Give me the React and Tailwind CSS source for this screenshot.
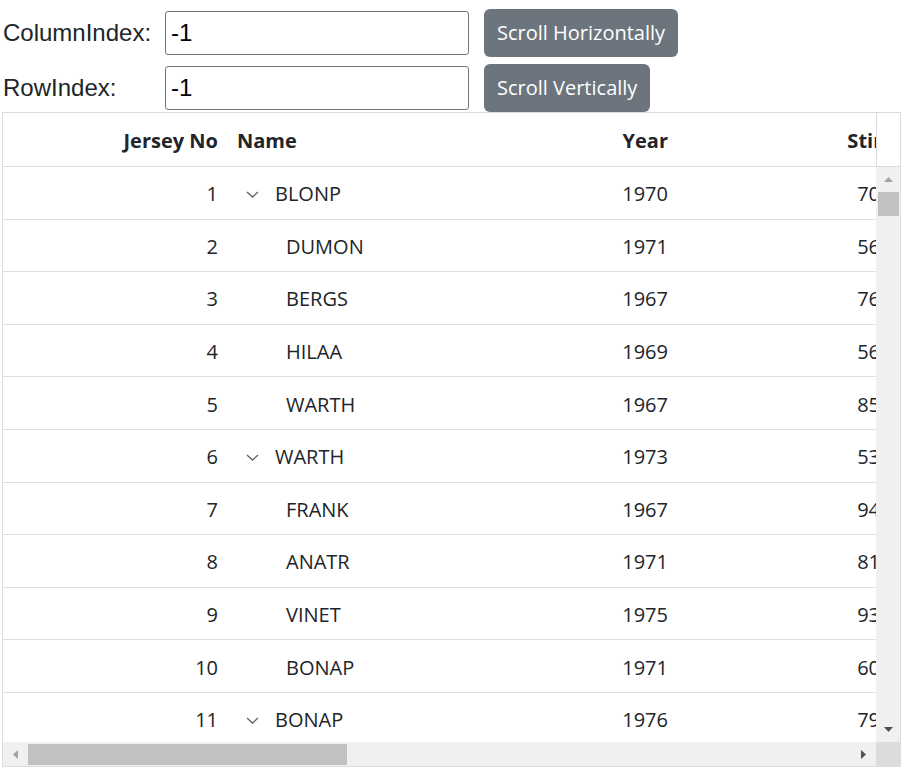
import React from 'react';

const rows = [
    { no: 1, name: 'BLONP', year: 1970, stint: 70, parent: true },
    { no: 2, name: 'DUMON', year: 1971, stint: 56 },
    { no: 3, name: 'BERGS', year: 1967, stint: 76 },
    { no: 4, name: 'HILAA', year: 1969, stint: 56 },
    { no: 5, name: 'WARTH', year: 1967, stint: 85 },
    { no: 6, name: 'WARTH', year: 1973, stint: 53, parent: true },
    { no: 7, name: 'FRANK', year: 1967, stint: 94 },
    { no: 8, name: 'ANATR', year: 1971, stint: 81 },
    { no: 9, name: 'VINET', year: 1975, stint: 93 },
    { no: 10, name: 'BONAP', year: 1971, stint: 60 },
    { no: 11, name: 'BONAP', year: 1976, stint: 79, parent: true },
];

const uiFont = { fontFamily: '"Segoe UI", "Open Sans", sans-serif' };

const Chevron = () => (
    <svg width="13" height="7" viewBox="0 0 13 7" className="shrink-0">
        <path d="M1 1 L6.5 6 L12 1" fill="none" stroke="#5f6368" strokeWidth="1.3" />
    </svg>
);

const Tri = ({ dir, color }) => {
    const pts = {
        up: '0,5 4.5,0 9,5',
        down: '0,0 4.5,5 9,0',
        left: '5,0 0,4.5 5,9',
        right: '0,0 5,4.5 0,9',
    }[dir];
    const vert = dir === 'up' || dir === 'down';
    return (
        <svg width={vert ? 9 : 5} height={vert ? 5 : 9} viewBox={vert ? '0 0 9 5' : '0 0 5 9'}>
            <polygon points={pts} fill={color} />
        </svg>
    );
};

const ControlRow = ({ label, button }) => (
    <div className="flex items-center h-[48px]">
        <div className="w-[165px] pl-[3px] text-[24px] text-[#212529] font-['Liberation_Sans',Arial,sans-serif]">
            {label}
        </div>
        <input
            defaultValue="-1"
            className="w-[304px] h-[44px] border border-[#767676] rounded-[3px] px-[5px] text-[24px] text-black font-['Liberation_Sans',Arial,sans-serif] outline-none"
        />
        <button
            className="ml-[15px] h-[48px] px-[13px] bg-[#6c757d] text-white text-[20px] rounded-[6px]"
            style={uiFont}
        >
            {button}
        </button>
    </div>
);

export default function App() {
    return (
        <div className="w-[904px] h-[769px] bg-white overflow-hidden pt-[9px]">
            <div className="flex flex-col gap-[7px]">
                <ControlRow label="ColumnIndex:" button="Scroll Horizontally" />
                <ControlRow label="RowIndex:" button="Scroll Vertically" />
            </div>

            {/* Grid */}
            <div
                className="ml-[2px] w-[899px] border border-[#dcdcdc] flex flex-col text-[20px] text-[#212529]"
                style={uiFont}
            >
                {/* Header */}
                <div className="flex h-[54px] border-b border-[#dcdcdc]">
                    <div className="w-[873px] overflow-hidden flex items-center font-bold pt-[2px]">
                        <div className="w-[225px] shrink-0 text-right pr-[10px]">Jersey No</div>
                        <div className="w-[300px] shrink-0 pl-[9px]">Name</div>
                        <div className="w-[150px] shrink-0 text-right pr-[10px]">Year</div>
                        <div className="w-[227px] shrink-0 text-right pr-[10px]">Stint</div>
                    </div>
                    <div className="flex-1 border-l border-[#dcdcdc]" />
                </div>

                {/* Body */}
                <div className="flex h-[575px]">
                    <div className="w-[873px] overflow-hidden">
                        {rows.map((r) => (
                            <div
                                key={r.no}
                                className="flex items-center h-[52.6px] pt-[3px] border-b border-[#e0e0e0] shrink-0"
                            >
                                <div className="w-[225px] shrink-0 text-right pr-[10px]">{r.no}</div>
                                <div className="w-[300px] shrink-0 flex items-center">
                                    {r.parent ? (
                                        <>
                                            <span className="pl-[18px]" />
                                            <Chevron />
                                            <span className="pl-[16px]">{r.name}</span>
                                        </>
                                    ) : (
                                        <span className="pl-[58px]">{r.name}</span>
                                    )}
                                </div>
                                <div className="w-[150px] shrink-0 text-right pr-[10px]">{r.year}</div>
                                <div className="w-[227px] shrink-0 text-right pr-[25px]">{r.stint}</div>
                            </div>
                        ))}
                    </div>
                    {/* Vertical scrollbar */}
                    <div className="flex-1 bg-[#f0f0f0] flex flex-col items-center">
                        <div className="h-[25px] flex items-center justify-center">
                            <Tri dir="up" color="#a3a3a3" />
                        </div>
                        <div className="w-[21px] h-[24px] bg-[#c1c1c1]" />
                        <div className="flex-1" />
                        <div className="h-[25px] flex items-center justify-center">
                            <Tri dir="down" color="#505050" />
                        </div>
                    </div>
                </div>

                {/* Horizontal scrollbar */}
                <div className="flex h-[24px]">
                    <div className="w-[873px] bg-[#f0f0f0] flex items-center">
                        <div className="w-[25px] flex justify-center">
                            <Tri dir="left" color="#a3a3a3" />
                        </div>
                        <div className="w-[319px] h-[21px] bg-[#c1c1c1]" />
                        <div className="flex-1" />
                        <div className="w-[25px] flex justify-center">
                            <Tri dir="right" color="#505050" />
                        </div>
                    </div>
                    <div className="flex-1 bg-[#dcdcdc]" />
                </div>
            </div>
        </div>
    );
}
